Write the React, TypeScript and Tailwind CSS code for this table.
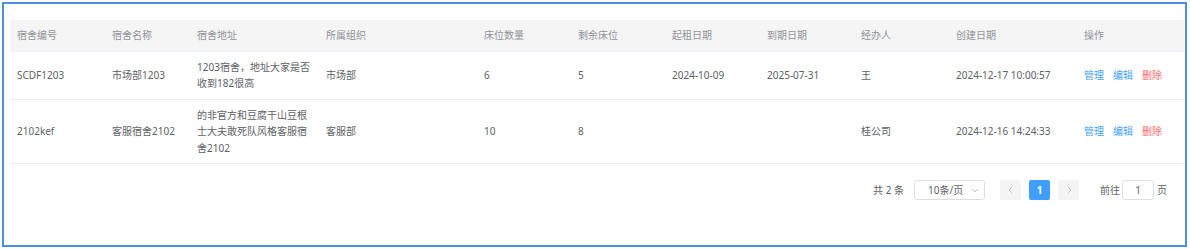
const columns = [
  { title: "宿舍编号", width: 95 },
  { title: "宿舍名称", width: 85 },
  { title: "宿舍地址", width: 129 },
  { title: "所属组织", width: 158 },
  { title: "床位数量", width: 94 },
  { title: "剩余床位", width: 94 },
  { title: "起租日期", width: 95 },
  { title: "到期日期", width: 94 },
  { title: "经办人", width: 95 },
  { title: "创建日期", width: 128 },
  { title: "操作", width: 107 },
];

const rows = [
  {
    code: "SCDF1203",
    name: "市场部1203",
    address: "1203宿舍，地址大家是否收到182很高",
    org: "市场部",
    beds: "6",
    left: "5",
    start: "2024-10-09",
    end: "2025-07-31",
    agent: "王",
    created: "2024-12-17 10:00:57",
  },
  {
    code: "2102kef",
    name: "客服宿舍2102",
    address: "的非官方和豆腐干山豆根士大夫敢死队风格客服宿舍2102",
    org: "客服部",
    beds: "10",
    left: "8",
    start: "",
    end: "",
    agent: "桂公司",
    created: "2024-12-16 14:24:33",
  },
];

function Chevron({ dir }: { dir: "left" | "right" | "down" }) {
  const d =
    dir === "left" ? "M6 2 L3 5 L6 8" : dir === "right" ? "M4 2 L7 5 L4 8" : "M2 4 L5 7 L8 4";
  return (
    <svg width="10" height="10" viewBox="0 0 10 10" fill="none">
      <path d={d} stroke="#c0c4cc" strokeWidth="1" />
    </svg>
  );
}

export default function App() {
  return (
    <div
      className="h-[249px] w-[1190px] bg-white p-[2px] text-[10px] text-[#606266]"
      style={{ fontFamily: '"Noto Sans", "Noto Sans CJK SC", sans-serif' }}
    >
      <div className="h-[245px] w-[1185px] border-2 border-[#4a90e2] pl-[6px] pt-[16px]">
        <table className="w-[1174px] table-fixed border-collapse">
          <colgroup>
            {columns.map((c) => (
              <col key={c.title} style={{ width: c.width }} />
            ))}
          </colgroup>
          <thead>
            <tr className="h-[31px] border-b border-[#ebeef5] bg-[#f5f5f6]">
              {columns.map((c) => (
                <th key={c.title} className="px-[7px] text-left font-normal leading-[16px] text-[#909399]">
                  {c.title}
                </th>
              ))}
            </tr>
          </thead>
          <tbody>
            {rows.map((r) => (
              <tr key={r.code} className="border-b border-[#ebeef5]">
                {[r.code, r.name, r.address, r.org, r.beds, r.left, r.start, r.end, r.agent, r.created].map(
                  (v, i) => (
                    <td key={i} className="px-[7px] py-[7px] align-middle leading-[16.5px] break-all">
                      {v}
                    </td>
                  )
                )}
                <td className="px-[7px] py-[7px] leading-[16.5px]">
                  <div className="flex gap-[9px]">
                    <span className="text-[#409eff]">管理</span>
                    <span className="text-[#409eff]">编辑</span>
                    <span className="text-[#f56c6c]">删除</span>
                  </div>
                </td>
              </tr>
            ))}
          </tbody>
        </table>

        <div className="mt-[16px] flex w-[1174px] items-center justify-end pr-[17px] text-[#606266]">
          <span className="mr-[10px]">共 2 条</span>
          <div className="mr-[15px] flex h-[20px] w-[71px] items-center justify-between rounded-[3px] border border-[#dcdfe6] pl-[13px] pr-[4px]">
            <span>10条/页</span>
            <Chevron dir="down" />
          </div>
          <div className="flex h-[20px] w-[21px] items-center justify-center rounded-[2px] bg-[#f4f4f5]">
            <Chevron dir="left" />
          </div>
          <div className="mx-[8px] flex h-[20px] w-[21px] items-center justify-center rounded-[2px] bg-[#409eff] font-bold text-white">
            1
          </div>
          <div className="flex h-[20px] w-[21px] items-center justify-center rounded-[2px] bg-[#f4f4f5]">
            <Chevron dir="right" />
          </div>
          <span className="ml-[21px] mr-[2px]">前往</span>
          <div className="flex h-[20px] w-[32px] items-center justify-center rounded-[3px] border border-[#dcdfe6]">
            1
          </div>
          <span className="ml-[3px]">页</span>
        </div>
      </div>
    </div>
  );
}
